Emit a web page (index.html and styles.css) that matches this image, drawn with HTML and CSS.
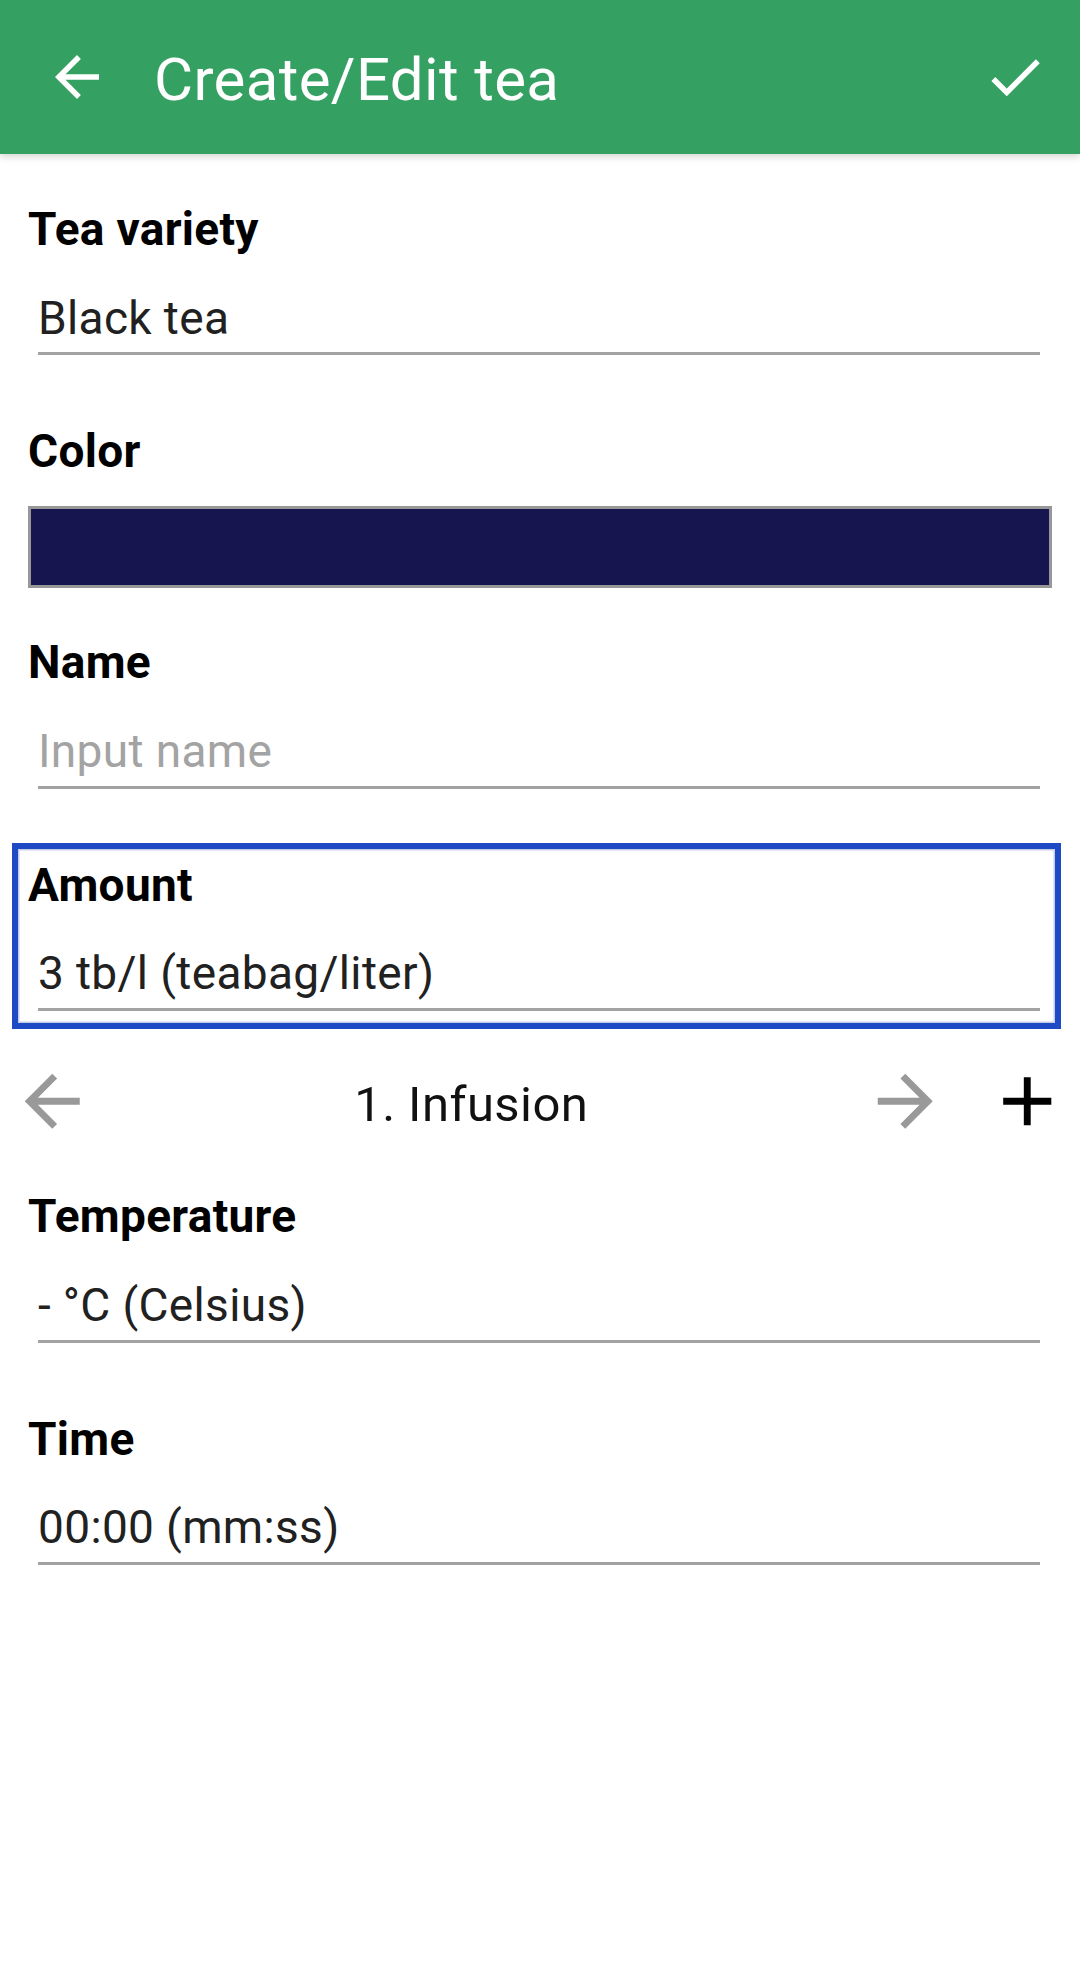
FILE: index.html
```html
<!DOCTYPE html>
<html lang="en">
<head>
<meta charset="utf-8">
<title>Create/Edit tea</title>
<link rel="stylesheet" href="styles.css">
</head>
<body>
<header class="appbar">
  <svg class="bar-icon back" viewBox="0 0 24 24" aria-hidden="true"><path d="M20 11H7.83l5.59-5.59L12 4l-8 8 8 8 1.41-1.41L7.83 13H20v-2z"/></svg>
  <h1 class="title">Create/Edit tea</h1>
  <svg class="bar-icon check" viewBox="0 0 24 24" aria-hidden="true"><path d="M9 16.17L4.83 12l-1.42 1.41L9 19 21 7l-1.41-1.41z"/></svg>
</header>

<main class="form">
  <section class="field first">
    <div class="label">Tea variety</div>
    <div class="input">Black tea</div>
  </section>

  <section class="field gap">
    <div class="label">Color</div>
    <div class="swatch"></div>
  </section>

  <section class="field after-swatch">
    <div class="label">Name</div>
    <div class="input placeholder">Input name</div>
  </section>

  <section class="field focused">
    <div class="label">Amount</div>
    <div class="input">3 tb/l (teabag/liter)</div>
  </section>

  <div class="stepper">
    <svg class="step-icon muted" viewBox="0 0 24 24" aria-hidden="true"><path d="M20 11H7.83l5.59-5.59L12 4l-8 8 8 8 1.41-1.41L7.83 13H20v-2z"/></svg>
    <div class="step-title">1. Infusion</div>
    <svg class="step-icon muted" viewBox="0 0 24 24" aria-hidden="true"><path d="M12 4l-1.41 1.41L16.17 11H4v2h12.17l-5.58 5.59L12 20l8-8z"/></svg>
    <svg class="step-icon add" viewBox="0 0 24 24" aria-hidden="true"><path d="M19 13h-6v6h-2v-6H5v-2h6V5h2v6h6v2z"/></svg>
  </div>

  <section class="field after-stepper">
    <div class="label">Temperature</div>
    <div class="input">- °C (Celsius)</div>
  </section>

  <section class="field gap">
    <div class="label">Time</div>
    <div class="input tight">00:00 (mm:ss)</div>
  </section>
</main>
</body>
</html>
```

FILE: styles.css
```css
* { box-sizing: border-box; }

html, body {
  margin: 0;
  padding: 0;
  background: #ffffff;
}

body {
  width: 1080px;
  min-height: 1962px;
  font-family: Roboto, "Noto Sans", "Liberation Sans", sans-serif;
  color: #000;
}

.appbar {
  height: 154px;
  background: #34a062;
  display: flex;
  align-items: center;
  box-shadow: 0 3px 7px rgba(0, 0, 0, 0.16);
  position: relative;
}

.bar-icon {
  width: 66px;
  height: 66px;
  fill: #ffffff;
  flex: none;
}

.bar-icon.back { margin-left: 44px; }
.bar-icon.check { margin-right: 32px; margin-left: auto; }

.title {
  margin: 5px 0 0 44px;
  font-size: 60px;
  font-weight: 400;
  line-height: 70px;
  letter-spacing: 0.35px;
  color: #ffffff;
  white-space: nowrap;
}

.form {
  padding-top: 45px;
}

.field {
  padding: 0 40px 0 28px;
}

.field.gap { margin-top: 66px; }
.field.after-swatch { margin-top: 44px; }
.field.after-stepper { margin-top: 43px; }

.label {
  font-size: 46px;
  font-weight: 700;
  line-height: 60px;
  letter-spacing: 0.3px;
  color: #000;
}

.input {
  margin: 29px 0 0 10px;
  font-size: 46px;
  line-height: 60px;
  letter-spacing: 0.35px;
  color: #212121;
  padding-bottom: 5px;
  border-bottom: 3px solid #a2a2a2;
  white-space: nowrap;
}

.first .input { padding-bottom: 4px; }
.input.tight { margin-top: 28px; }

.input.placeholder { color: #a3a3a3; }

.swatch {
  margin: 25px -12px 0 0;
  height: 82px;
  background: #161550;
  border: 3px solid #979797;
}

.field.focused {
  margin: 54px 19px 0 12px;
  padding: 6px 15px 12px 10px;
  border: 6px solid #1e4bc4;
  box-shadow: inset 0 0 0 1.5px #c3cbe9;
}

.focused .input { margin-top: 28px; }

.stepper {
  margin-top: 31px;
  height: 83px;
  padding: 0 12px 0 11px;
  display: flex;
  align-items: flex-start;
}

.step-icon {
  width: 82.5px;
  height: 82.5px;
  flex: none;
}

.step-icon.muted { fill: #999999; }
.step-icon.add { fill: #000000; margin-left: 39px; }

.step-title {
  flex: 1;
  margin-top: 3px;
  padding-right: 15px;
  text-align: center;
  font-size: 49px;
  line-height: 83px;
  letter-spacing: 0.45px;
  color: #111111;
  white-space: nowrap;
}
```
